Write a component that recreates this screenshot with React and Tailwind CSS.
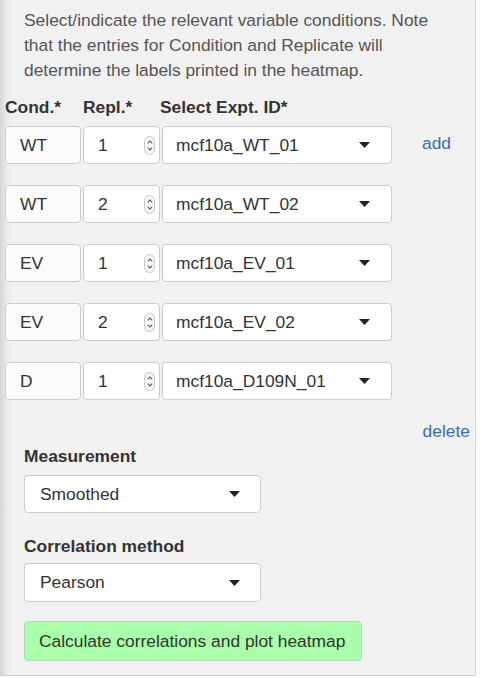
import React from "react";

const font = { fontFamily: '"Liberation Sans", Arial, sans-serif' };

function Caret() {
  return (
    <svg width="11" height="6" viewBox="0 0 11 6" className="shrink-0">
      <path d="M0 0 L11 0 L5.5 6 Z" fill="#222" />
    </svg>
  );
}

function Spinner() {
  return (
    <div className="w-[11px] h-[19px] rounded-[6px] border border-[#c8c8c8] bg-[#f7f7f7] flex flex-col items-center justify-center gap-[3px] shrink-0">
      <svg width="6" height="4" viewBox="0 0 6 4">
        <path d="M0.8 3.4 L3 1 L5.2 3.4" fill="none" stroke="#555" strokeWidth="1.1" />
      </svg>
      <svg width="6" height="4" viewBox="0 0 6 4">
        <path d="M0.8 0.6 L3 3 L5.2 0.6" fill="none" stroke="#555" strokeWidth="1.1" />
      </svg>
    </div>
  );
}

function Row({ cond, rep, id, add }) {
  return (
    <div className="flex items-center h-[38px]">
      <div className="w-[76px] h-[38px] rounded-[4px] border border-[#cccccc] bg-[#fbfbfb] flex items-center pl-[14px] text-[17.4px] text-[#333]">
        {cond}
      </div>
      <div className="ml-[2px] w-[77px] h-[38px] rounded-[4px] border border-[#cccccc] bg-white flex items-center pl-[14px] pr-[4px] text-[17.4px] text-[#333]">
        <span className="flex-1">{rep}</span>
        <Spinner />
      </div>
      <div className="ml-[2px] w-[230px] h-[38px] rounded-[4px] border border-[#cccccc] bg-white flex items-center pl-[13px] pr-[21px] text-[17.4px] text-[#333]">
        <span className="flex-1 whitespace-nowrap">{id}</span>
        <Caret />
      </div>
      {add && <span className="ml-[30px] text-[17.4px] text-[#3b6eae] -mt-[3px]">add</span>}
    </div>
  );
}

function Select({ value, h }) {
  return (
    <div className={`w-[237px] ${h} rounded-[4px] border border-[#cccccc] bg-white flex items-center pl-[15px] pr-[20px] text-[17.4px] text-[#333]`}>
      <span className="flex-1">{value}</span>
      <Caret />
    </div>
  );
}

export default function App() {
  const rows = [
    ["WT", "1", "mcf10a_WT_01", true],
    ["WT", "2", "mcf10a_WT_02"],
    ["EV", "1", "mcf10a_EV_01"],
    ["EV", "2", "mcf10a_EV_02"],
    ["D", "1", "mcf10a_D109N_01"],
  ];
  return (
    <div className="w-[487px] h-[678px] bg-white flex" style={font}>
      <div className="w-[476px] h-[676px] border-r border-b border-[#cfcfcf] bg-[linear-gradient(to_right,#d6d6d6,#ececec_7px,#f1f1f1_14px)] shadow-[inset_-1px_0_0_#fafafa]">
        <p className="pl-[24px] pt-[8px] text-[17.4px] leading-[25px] text-[#555] whitespace-nowrap">
          Select/indicate the relevant variable conditions. Note
          <br />
          that the entries for Condition and Replicate will
          <br />
          determine the labels printed in the heatmap.
        </p>
        <div className="mt-[14px] flex pl-[5px] text-[17.4px] font-bold text-[#333] leading-[20px] whitespace-nowrap">
          <span className="w-[78px]">Cond.*</span>
          <span className="w-[77px]">Repl.*</span>
          <span>Select Expt. ID*</span>
        </div>
        <div className="mt-[9px] pl-[5px] flex flex-col gap-[21px]">
          {rows.map((r, i) => (
            <Row key={i} cond={r[0]} rep={r[1]} id={r[2]} add={r[3]} />
          ))}
        </div>
        <div className="mt-[22px] flex justify-end pr-[5px] text-[17.4px] text-[#3b6eae] leading-[18px]">
          delete
        </div>
        <div className="pl-[24px]">
          <div className="mt-[6px] text-[17.4px] font-bold text-[#333] leading-[20px]">Measurement</div>
          <div className="mt-[9px]">
            <Select value="Smoothed" h="h-[38px]" />
          </div>
          <div className="mt-[23px] text-[17.4px] font-bold text-[#333] leading-[20px]">Correlation method</div>
          <div className="mt-[7px]">
            <Select value="Pearson" h="h-[39px]" />
          </div>
          <div className="mt-[19px] w-[338px] h-[40px] rounded-[4px] border border-[#b5d9b5] bg-[#aaffaa] flex items-center pl-[14px] text-[17.4px] text-[#333] whitespace-nowrap">
            Calculate correlations and plot heatmap
          </div>
        </div>
      </div>
    </div>
  );
}
